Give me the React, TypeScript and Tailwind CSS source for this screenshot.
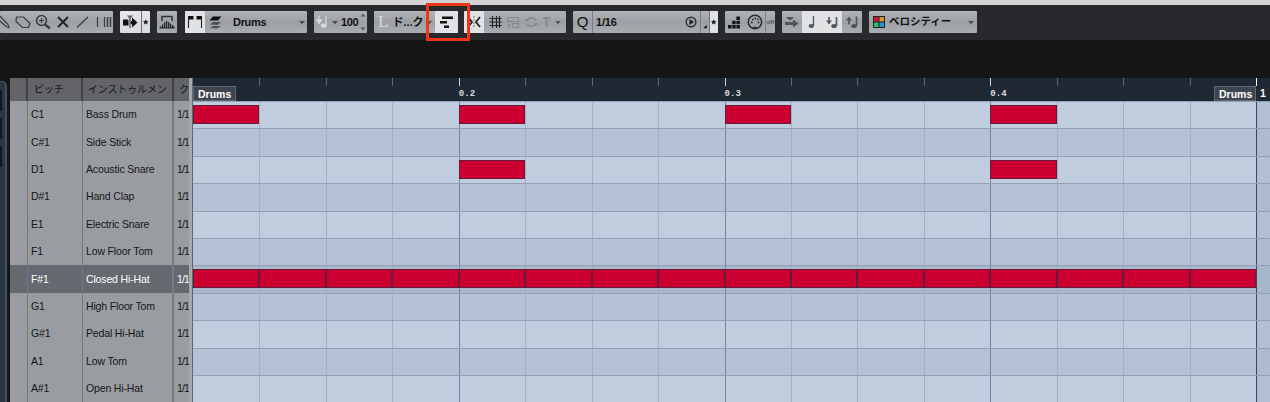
import type { ReactNode } from 'react';
import clsx from 'clsx';

const rows = [
  { pitch: 'C1', name: 'Bass Drum', notes: [0, 4, 8, 12] },
  { pitch: 'C#1', name: 'Side Stick', notes: [] },
  { pitch: 'D1', name: 'Acoustic Snare', notes: [4, 12] },
  { pitch: 'D#1', name: 'Hand Clap', notes: [] },
  { pitch: 'E1', name: 'Electric Snare', notes: [] },
  { pitch: 'F1', name: 'Low Floor Tom', notes: [] },
  { pitch: 'F#1', name: 'Closed Hi-Hat', notes: [0, 1, 2, 3, 4, 5, 6, 7, 8, 9, 10, 11, 12, 13, 14, 15], selected: true },
  { pitch: 'G1', name: 'High Floor Tom', notes: [] },
  { pitch: 'G#1', name: 'Pedal Hi-Hat', notes: [] },
  { pitch: 'A1', name: 'Low Tom', notes: [] },
  { pitch: 'A#1', name: 'Open Hi-Hat', notes: [] },
] as { pitch: string; name: string; notes: number[]; selected?: boolean }[];

const steps = Array.from({ length: 16 }, (_, i) => i);

const Group = ({ className, children }: { className: string; children: ReactNode }) => (
  <div className={clsx('flex h-[22px] shrink-0 items-center overflow-hidden rounded-[1px] bg-linear-to-b from-[#b0b4b8] via-[#9da1a6] to-[#a9adb1]', className)}>
    {children}
  </div>
);

const Icon = ({ w, className, children }: { w: number; className?: string; children: ReactNode }) => (
  <svg width={w} height={22} viewBox={`0 0 ${w} 22`} fill="none" className={clsx('shrink-0', className)}>
    {children}
  </svg>
);

const Arrow = () => (
  <Icon w={8}>
    <path d="M1 10h6l-3 3.2z" fill="#4b4e52" />
  </Icon>
);

const Star = ({ className }: { className?: string }) => (
  <Icon w={9} className={clsx('border-l border-[#6d7074]', className)}>
    <path d="M4.2 8l1 2 2.2.2-1.600 1.500.5 2.200-2.100-1.100-2.100 1.100.5-2.200L1 10.200l2.200-.2z" fill="#222" />
  </Icon>
);

const Toolbar = () => (
  <div className="flex h-[35px] gap-[7px] bg-[#27292c] pt-[6px] text-[11px] font-bold text-[#111]">
    <Group className="w-[113px]">
      <Icon w={113}>
        <g stroke="#3a3c40" strokeWidth="1.200">
          <path d="M0 5l8 8.500 1 3-3-1L-2 8" />
          <path d="M16.500 6h7l6.500 6.500-1.500 4h-6l-6.500-6z" />
          <circle cx="41.500" cy="9.500" r="5" strokeWidth="1.500" />
          <path d="M45 13.500l5 4" strokeWidth="2.500" />
          <path d="M39 9.500h5M41.500 7v5" />
          <path d="M58 6l10 10M68 6L58 16" strokeWidth="1.800" stroke="#202124" />
          <path d="M77 16.500L88 6" />
          <path d="M97.500 6v10M104.500 6v10" />
          <path d="M107.500 6v10M110.500 6v10" strokeWidth="1.500" />
        </g>
      </Icon>
    </Group>

    <Group className="w-[30px] from-[#e8e9eb] via-[#dcdde0] to-[#dcdde0]">
      <Icon w={21}>
        <path d="M3 8.500h5.500v6H3zM12 6.500l5.500 5-5.500 5z" fill="#111" />
        <path d="M7 4.500h6l-2.200 3v9.500H9.200V7.500z" fill="#666a6e" />
        <path d="M10.800 11.500H13" stroke="#111" strokeWidth="3" />
      </Icon>
      <Star />
    </Group>

    <Group className="mr-px w-[20px]">
      <Icon w={20}>
        <path d="M5 10V5.500h10V10" stroke="#303236" strokeWidth="1.500" />
        <path d="M3.500 17v-1.500M5.500 17v-3.500M7.500 17v-5.500M9.500 17v-7M11.500 17v-6M13.500 17v-4.500M15.500 17v-3M17 17v-1.500" stroke="#222427" strokeWidth="1.300" />
        <path d="M2.500 17h15" stroke="#222427" />
      </Icon>
    </Group>

    <Group className="w-[122px]">
      <Icon w={20} className="bg-[#e1e2e4]">
        <path d="M3 5h5.500v3.500H3zM11.500 5H17v3.500h-5.500z" fill="#111" />
        <path d="M3.500 5v12M16.500 5v12" stroke="#222" strokeWidth="1.100" />
      </Icon>
      <Icon w={20}>
        <path d="M5 13.500l3-2.500h8l-3.500 3zM5 17l3-2h8l-3.500 2.500z" fill="#4d5054" />
        <path d="M4.500 9.500l3.500-4h8.500l-3.500 4z" fill="#111" />
      </Icon>
      <span className="w-[73px] pl-2 tracking-[-0.300px]">Drums</span>
      <Arrow />
    </Group>

    <Group className="w-[53px]">
      <Icon w={17}>
        <path d="M5 5v5M2.500 9h5L5 12.500zM12 5v9" stroke="#d4d7db" strokeWidth="1.300" fill="#d4d7db" />
        <ellipse cx="9.800" cy="14.500" rx="3" ry="2.300" fill="#d4d7db" />
      </Icon>
      <Arrow />
      <span className="w-[20px] pl-0.5 tracking-[-0.400px]">100</span>
      <Icon w={8}>
        <path d="M1.500 5.500h5l-2.500-3zM1.500 16.500h5l-2.500 3z" fill="#55585c" />
      </Icon>
    </Group>

    <Group className="w-[84px]">
      <span className="w-[19px] pl-1 font-['Liberation_Serif'] text-[17px] font-normal text-[#d5d8dc]">L</span>
      <span className="w-[34px] whitespace-nowrap">ド...ク</span>
      <Arrow />
      <Icon w={23} className="ml-0.5 bg-[#e1e2e4]">
        <path d="M7 5.500h11v2.500H7zM5 10h7v2.500H5zM9 14.500h5V17H9z" fill="#111" />
      </Icon>
    </Group>

    <Group className="-ml-px w-[102px]">
      <Icon w={20} className="bg-[#e1e2e4]">
        <path d="M4 6l4 5-4 5M16 6l-4 5 4 5" stroke="#222" strokeWidth="1.800" />
        <path d="M10 5v12" stroke="#777" strokeDasharray="2 1" />
      </Icon>
      <Icon w={82}>
        <path d="M8.500 5v12M12.500 5v12M5.500 7.500h12M5.500 11h12M5.500 14.500h12M15.500 5v12" stroke="#222427" strokeWidth="1.100" />
        <g stroke="#85888d" strokeWidth="1.200">
          <path d="M23.500 6.500h11v4h-11zM28.500 12.500h6v4h-6zM26 13l-2 2 2 2" />
          <path d="M43 9c2-3 7-3 9 0M52 13c-2 3-7 3-9 0M41 9h4M50 13h4" strokeWidth="1.500" />
          <path d="M59 7h7M62.500 7v9" strokeWidth="1.800" />
        </g>
        <path d="M71 10h6l-3 3.200z" fill="#55585c" />
      </Icon>
    </Group>

    <Group className="w-[145px]">
      <span className="flex h-full w-[20px] items-center justify-center border-r border-[#7c7f83] text-[15px] font-normal">Q</span>
      <span className="w-[87px] pl-[3px] tracking-[-0.200px]">1/16</span>
      <Icon w={20}>
        <circle cx="11" cy="11" r="4.800" stroke="#333" strokeWidth="1.500" />
        <path d="M9.500 8l4.500 3-4.500 3z" fill="#222" />
      </Icon>
      <Icon w={9} className="border-l border-[#7c7f83]">
        <path d="M6.500 14v4h-4z" fill="#111" />
      </Icon>
      <Star className="bg-[#e1e2e4]" />
    </Group>

    <Group className="w-[50px]">
      <Icon w={20}>
        <path d="M3 14h3.500v3.500H3zM7.200 14h3.500v3.500H7.200zM11.400 14h3.500v3.500h-3.500zM7.200 9.800h3.500v3.500H7.200zM11.400 9.800h3.500v3.500h-3.500zM11.400 5.600h3.500v3.500h-3.500z" fill="#151617" />
      </Icon>
      <Icon w={20}>
        <circle cx="10" cy="11" r="6.700" stroke="#292b2e" strokeWidth="1.500" />
        <path d="M6 11.500h1.500M7 8.500h1.500M9.500 7.500H11M12 8.500h1.500M12.800 11.500h1.500M8.500 16.500h3" stroke="#222" strokeWidth="1.600" />
      </Icon>
      <span className="flex h-full w-[10px] items-center justify-center border-l border-[#7c7f83] text-[6px] text-[#55585c]">off</span>
    </Group>

    <Group className="w-[80px]">
      <Icon w={20}>
        <path d="M4 6h8l-3 3H7zM3 11h8V8.500l5.500 4-5.500 4V14H3z" fill="#505358" />
      </Icon>
      <Icon w={20} className="bg-[#e1e2e4]">
        <path d="M11.500 5v10" stroke="#55585c" strokeWidth="1.300" />
        <ellipse cx="9.300" cy="15" rx="2.700" ry="2" fill="#55585c" />
      </Icon>
      <Icon w={20} className="bg-[#e1e2e4]">
        <path d="M14.500 6v9M7 6v4" stroke="#55585c" strokeWidth="1.700" />
        <path d="M4 9.500h6l-3 4z" fill="#55585c" />
        <ellipse cx="12" cy="15" rx="2.800" ry="2" fill="#55585c" />
      </Icon>
      <Icon w={20}>
        <path d="M14.500 5.500V15M7 9v4.500" stroke="#505358" strokeWidth="1.700" />
        <path d="M4 9.500h6l-3-4z" fill="#505358" />
        <ellipse cx="12" cy="15" rx="2.800" ry="2" fill="#505358" />
      </Icon>
    </Group>

    <Group className="w-[108px]">
      <Icon w={20}>
        <path d="M4 5h12v12H4z" fill="#202124" />
        <path d="M5 6h4.500v4.500H5z" fill="#c91437" />
        <path d="M10.500 6H15v4.500h-4.500z" fill="#ce9a35" />
        <path d="M5 11.500h4.500V16H5z" fill="#22be63" />
        <path d="M10.500 11.500H15V16h-4.500z" fill="#2690dc" />
      </Icon>
      <span className="w-[78px] whitespace-nowrap text-[10.500px]">ベロシティー</span>
      <Arrow />
    </Group>
  </div>
);

const DrumList = () => (
  <div className="w-[179px] shrink-0 bg-[#999da1] text-[10.500px] tracking-[-0.150px] text-[#151618]">
    <div className="flex h-[23px] items-center overflow-hidden bg-[#626467] text-[10px]">
      <div className="h-full w-[18px] border-r-2 border-[#3f4144]" />
      <div className="flex h-full w-[55px] items-center border-r-2 border-[#3f4144] pl-[6px]">ピッチ</div>
      <div className="flex h-full w-[91px] items-center border-r-2 border-[#3f4144] pl-[5px] whitespace-nowrap">インストゥルメン</div>
      <div className="pl-[5px]">ク</div>
    </div>
    {rows.map((row) => (
      <div
        key={row.pitch}
        className={clsx('flex h-[27.400px]', row.selected && 'bg-[#656970] text-white')}
      >
        <div className="w-[18px] border-r border-[#75797e]" />
        <div className="flex w-[55px] items-center border-r border-[#75797e] pt-px pl-[3px]">{row.pitch}</div>
        <div className="flex w-[91px] items-center border-r-2 border-[#777b80] pt-px pl-[3px] whitespace-nowrap">{row.name}</div>
        <div className="flex w-[15px] items-center pt-px pl-[3px] tracking-[-0.900px]">1/1</div>
      </div>
    ))}
  </div>
);

const Ruler = () => (
  <div className="flex h-[23px] bg-[#1f2933] text-white">
    {steps.map((i) => (
      <div key={i} className="w-[66.450px] shrink-0">
        {i > 0 && <div className={clsx('h-2 w-px', i % 4 === 0 ? 'bg-[#cdd3d8]' : 'bg-[#59636c]')} />}
        {i === 0 && (
          <div className="mt-2 h-[15px] w-[43px] border border-[#626971] bg-[#3e454e] pl-[4px] text-[10.500px] leading-[14px] font-bold">Drums</div>
        )}
        {i > 0 && i % 4 === 0 && (
          <div className="pt-[2px] font-['Liberation_Mono'] text-[9px] leading-3 font-bold tracking-[0.100px] text-[#d7dbdf]">0.{i / 4 + 1}</div>
        )}
        {i === 15 && (
          <div className="ml-auto h-[15px] w-[42px] border border-[#626971] bg-[#3e454e] pl-[4px] text-[10.500px] leading-[14px] font-bold">Drums</div>
        )}
      </div>
    ))}
    <div className="flex-1">
      <div className="h-2 w-px bg-white" />
      <div className="pl-1 text-[10.500px] leading-[15px] font-bold">1</div>
    </div>
  </div>
);

const NoteGrid = () => (
  <div className="min-w-0 flex-1 overflow-hidden">
    <Ruler />
    {rows.map((row, r) => (
      <div
        key={row.pitch}
        className={clsx(
          'flex h-[27.400px] border-t border-[#91a0b5]',
          row.selected ? 'bg-[#a9b6cb]' : r % 2 === 0 ? 'bg-[#c0cddf]' : 'bg-[#b6c1d6]',
        )}
      >
        {steps.map((i) => (
          <div
            key={i}
            className={clsx(
              'w-[66.450px] shrink-0',
              i > 0 && 'border-l',
              i % 4 === 0 ? 'border-[#75869c]' : 'border-[#a4b1c4]',
            )}
          >
            {row.notes.includes(i) && (
              <div className={clsx('relative mt-[3px] h-[19px] border border-[#661b3b] bg-[#cb0031]', i > 0 && '-ml-px')} />
            )}
          </div>
        ))}
        <div className="flex-1 border-l border-[#394957] bg-[#a9b5c9]/60" />
      </div>
    ))}
  </div>
);

export default function App() {
  return (
    <div className="relative h-[402px] w-[1270px] overflow-hidden bg-[#151515] font-['Liberation_Sans','Noto_Sans_CJK_JP',sans-serif]">
      <div className="h-[5px] bg-[#d4d4d4]" />
      <Toolbar />
      <div className="h-[38px]" />
      <div className="flex h-[324px] overflow-hidden">
        <div className="mt-[3px] mr-[3px] flex w-[7px] shrink-0 flex-col gap-[7px] rounded-tr-[5px] border-t border-r-2 border-[#435160] bg-[#2b3640] pt-2">
          <div className="h-[21px] w-[2px] bg-[#111820]" />
          <div className="h-[21px] w-[2px] bg-[#111820]" />
          <div className="h-[21px] w-[2px] bg-[#111820]" />
        </div>
        <DrumList />
        <div className="w-1 shrink-0 border-r border-[#60666d] bg-[#a5a8ac]" />
        <NoteGrid />
      </div>
      <div className="absolute top-[3px] left-[426px] h-[38px] w-[44px] border-3 border-[#ef3515]" />
    </div>
  );
}
